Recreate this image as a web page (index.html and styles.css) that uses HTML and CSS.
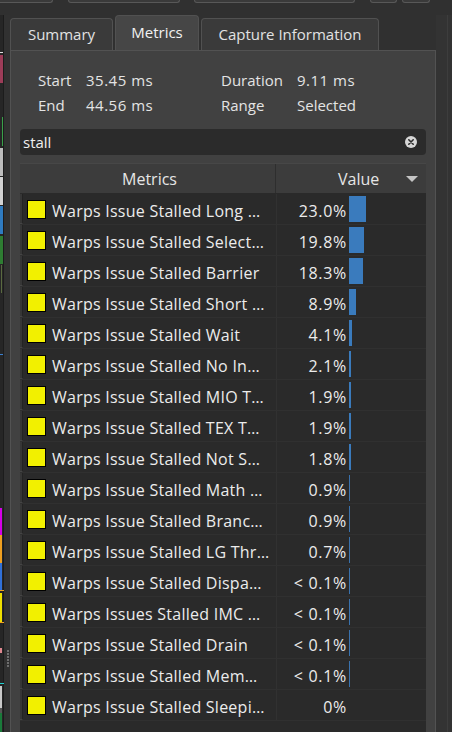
FILE: index.html
```html
<!DOCTYPE html>
<html>
<head>
<meta charset="utf-8">
<link rel="stylesheet" href="styles.css">
</head>
<body>
<div class="topbar">
  <div class="tbtn b1"></div>
  <div class="tbtn b2"></div>
  <div class="tbtn b3"></div>
  <div class="tbtn b4"></div>
  <div class="tbtn b5"></div>
</div>
<div class="content">
  <div class="sidebar">
    <div class="track"></div>
    <div class="item" style="top:37px;height:1px;left:0;width:3px;background:#e0e0e0"></div>
    <div class="item" style="top:40px;height:28px;left:0;width:3px;background:#9c3c58"></div>
    <div class="item" style="top:102px;height:29px;left:2px;width:1px;background:#3aa04a"></div>
    <div class="item" style="top:133px;height:28px;left:0;width:3px;background:#bdbdbd"></div>
    <div class="item" style="top:162px;height:28px;left:0;width:3px;background:#d2d2d2"></div>
    <div class="item" style="top:191px;height:28px;left:0;width:3px;background:#2f7bc0"></div>
    <div class="item" style="top:221px;height:28px;left:0;width:3px;background:#2e7d32"></div>
    <div class="item" style="top:250px;height:28px;left:1px;width:1px;background:#5a6a40"></div>
    <div class="item" style="top:339px;height:1px;left:0;width:3px;background:#3a80d0"></div>
    <div class="item" style="top:493px;height:27px;left:0;width:2px;background:#d400e8"></div>
    <div class="item" style="top:520px;height:28px;left:0;width:2px;background:#f0a020"></div>
    <div class="item" style="top:548px;height:27px;left:0;width:2px;background:#3070d8"></div>
    <div class="item" style="top:575px;height:1px;left:0;width:4px;background:#f0a020"></div>
    <div class="item" style="top:578px;height:29px;left:0;width:2px;background:#f0e000"></div>
    <div class="item" style="top:607px;height:1px;left:0;width:4px;background:#f0a020"></div>
    <div class="item" style="top:633px;height:5px;left:0;width:2px;background:#e08890"></div>
    <div class="item" style="top:668px;height:1px;left:0;width:4px;background:#20d0d0"></div>
    <div class="item" style="top:671px;height:22px;left:0;width:2px;background:#c8c8c8"></div>
    <div class="item" style="top:693px;height:5px;left:0;width:2px;background:#555555"></div>
    <div class="item" style="top:698px;height:19px;left:0;width:2px;background:#1a7a3a"></div>
    <div class="grip"><span></span><span></span><span></span><span></span><span></span><span></span></div>
  </div>
  <div class="center">
    <div class="tabs">
      <div class="tab t-summary">Summary</div>
      <div class="tab t-metrics active">Metrics</div>
      <div class="tab t-capture">Capture Information</div>
    </div>
    <div class="panel">
      <div class="info">
        <span>Start</span><span class="nv">35.45 ms</span><span>Duration</span><span class="nv">9.11 ms</span>
        <span>End</span><span class="nv">44.56 ms</span><span>Range</span><span>Selected</span>
      </div>
      <div class="search">
        <span class="search-text">stall</span>
        <svg class="clear" width="12" height="12" viewBox="0 0 12 12"><circle cx="6" cy="6" r="6" fill="#d6d6d6"/><path d="M3.8 3.8 L8.2 8.2 M8.2 3.8 L3.8 8.2" stroke="#2c2c2c" stroke-width="1.6" stroke-linecap="round"/></svg>
      </div>
      <div class="table">
        <div class="thead">
          <div class="th th-metrics">Metrics</div>
          <div class="th th-value"><span class="vlabel">Value</span><svg class="sort" width="12" height="6" viewBox="0 0 12 6"><path d="M0 0 H12 L6 6 Z" fill="#c4c4c4"/></svg></div>
        </div>
        <div class="row"><div class="gut"></div><div class="name"><span class="sq"></span><span class="lbl">Warps Issue Stalled Long …</span></div><div class="val"><span class="num">23.0%</span><span class="bar" style="width:17px"></span></div></div>
        <div class="row"><div class="gut"></div><div class="name"><span class="sq"></span><span class="lbl">Warps Issue Stalled Select…</span></div><div class="val"><span class="num">19.8%</span><span class="bar" style="width:15px"></span></div></div>
        <div class="row"><div class="gut"></div><div class="name"><span class="sq"></span><span class="lbl">Warps Issue Stalled Barrier</span></div><div class="val"><span class="num">18.3%</span><span class="bar" style="width:14px"></span></div></div>
        <div class="row"><div class="gut"></div><div class="name"><span class="sq"></span><span class="lbl">Warps Issue Stalled Short …</span></div><div class="val"><span class="num">8.9%</span><span class="bar" style="width:7px"></span></div></div>
        <div class="row"><div class="gut"></div><div class="name"><span class="sq"></span><span class="lbl">Warps Issue Stalled Wait</span></div><div class="val"><span class="num">4.1%</span><span class="bar" style="width:3px"></span></div></div>
        <div class="row"><div class="gut"></div><div class="name"><span class="sq"></span><span class="lbl">Warps Issue Stalled No In…</span></div><div class="val"><span class="num">2.1%</span><span class="bar" style="width:2px"></span></div></div>
        <div class="row"><div class="gut"></div><div class="name"><span class="sq"></span><span class="lbl">Warps Issue Stalled MIO T…</span></div><div class="val"><span class="num">1.9%</span><span class="bar" style="width:2px"></span></div></div>
        <div class="row"><div class="gut"></div><div class="name"><span class="sq"></span><span class="lbl">Warps Issue Stalled TEX T…</span></div><div class="val"><span class="num">1.9%</span><span class="bar" style="width:2px"></span></div></div>
        <div class="row"><div class="gut"></div><div class="name"><span class="sq"></span><span class="lbl">Warps Issue Stalled Not S…</span></div><div class="val"><span class="num">1.8%</span><span class="bar" style="width:2px"></span></div></div>
        <div class="row"><div class="gut"></div><div class="name"><span class="sq"></span><span class="lbl">Warps Issue Stalled Math …</span></div><div class="val"><span class="num">0.9%</span><span class="bar thin" style="width:1px"></span></div></div>
        <div class="row"><div class="gut"></div><div class="name"><span class="sq"></span><span class="lbl">Warps Issue Stalled Branc…</span></div><div class="val"><span class="num">0.9%</span><span class="bar thin" style="width:1px"></span></div></div>
        <div class="row"><div class="gut"></div><div class="name"><span class="sq"></span><span class="lbl">Warps Issue Stalled LG Thr…</span></div><div class="val"><span class="num">0.7%</span><span class="bar thin" style="width:1px"></span></div></div>
        <div class="row"><div class="gut"></div><div class="name"><span class="sq"></span><span class="lbl">Warps Issue Stalled Dispa…</span></div><div class="val"><span class="num">&lt; 0.1%</span><span class="bar thin" style="width:1px"></span></div></div>
        <div class="row"><div class="gut"></div><div class="name"><span class="sq"></span><span class="lbl">Warps Issues Stalled IMC …</span></div><div class="val"><span class="num">&lt; 0.1%</span><span class="bar thin" style="width:1px"></span></div></div>
        <div class="row"><div class="gut"></div><div class="name"><span class="sq"></span><span class="lbl">Warps Issue Stalled Drain</span></div><div class="val"><span class="num">&lt; 0.1%</span><span class="bar thin" style="width:1px"></span></div></div>
        <div class="row"><div class="gut"></div><div class="name"><span class="sq"></span><span class="lbl">Warps Issue Stalled Mem…</span></div><div class="val"><span class="num">&lt; 0.1%</span><span class="bar thin" style="width:1px"></span></div></div>
        <div class="row"><div class="gut"></div><div class="name"><span class="sq"></span><span class="lbl">Warps Issue Stalled Sleepi…</span></div><div class="val"><span class="num">0%</span></div></div>
      </div>
    </div>
  </div>
  <div class="rstrip"><div class="rline"></div></div>
</div>
</body>
</html>
```
FILE: styles.css
```css
* { box-sizing: border-box; }
html, body { margin: 0; padding: 0; }
body {
  width: 452px;
  height: 732px;
  overflow: hidden;
  background: #303030;
  font-family: "Open Sans", "Noto Sans", sans-serif;
  font-size: 15px;
  color: #e6e6e6;
  display: flex;
  flex-direction: column;
}
.topbar {
  height: 15px;
  flex: none;
  display: flex;
  align-items: flex-start;
  background: #303030;
}
.tbtn {
  height: 3px;
  background: #3a3a3a;
  border: 1px solid #585858;
  border-top: none;
  border-radius: 0 0 3px 3px;
}
.b1 { width: 58px; margin-left: -5px; }
.b2 { width: 112px; margin-left: 15px; }
.b3 { width: 161px; margin-left: 14px; }
.b4 { width: 27px; margin-left: 15px; }
.b5 { width: 28px; margin-left: 5px; }
.content {
  flex: 1;
  display: flex;
  min-height: 0;
}
.sidebar {
  width: 10px;
  flex: none;
  position: relative;
  background: #313131;
}
.track {
  position: absolute;
  left: 0; top: 0; bottom: 0;
  width: 4px;
  background: #262626;
  border-right: 1px solid #1c1c1c;
}
.item { position: absolute; }
.grip {
  position: absolute;
  left: 7px;
  top: 635px;
  display: flex;
  flex-direction: column;
  gap: 1px;
}
.grip span { width: 2px; height: 2px; background: #6e6e6e; }
.center {
  width: 426px;
  flex: none;
  display: flex;
  flex-direction: column;
}
.tabs {
  height: 35px;
  flex: none;
  display: flex;
  align-items: flex-end;
  gap: 1px;
}
.tab {
  height: 32px;
  display: flex;
  align-items: center;
  justify-content: center;
  background: #3a3a3a;
  border: 1px solid #515151;
  border-bottom: none;
  border-radius: 4px 4px 0 0;
  color: #e2e2e2;
  padding-bottom: 1px;
}
.t-summary { width: 103px; }
.t-metrics { width: 84px; height: 35px; margin-left: 1px; padding-bottom: 3px; }
.t-capture { width: 178px; margin-left: 1px; }
.tab.active { background: #464646; color: #f2f2f2; }
.panel {
  flex: 1;
  min-height: 0;
  background: #414141;
  border: 1px solid #525252;
  border-bottom: none;
  padding: 17px 9px 0 9px;
  display: flex;
  flex-direction: column;
}
.info {
  display: grid;
  grid-template-columns: 48px 135px 76px auto;
  line-height: 25px;
  padding-left: 18px;
  color: #e4e4e4;
}
.nv { letter-spacing: 0.5px; }
.search {
  margin-top: 11px;
  height: 26px;
  flex: none;
  background: #2b2b2b;
  border-radius: 4px;
  display: flex;
  align-items: center;
  padding: 0 9px 0 3px;
}
.search-text { flex: 1; color: #f0f0f0; }
.clear { flex: none; }
.table {
  margin-top: 8px;
  flex: 1;
  min-height: 0;
  background: #2a2a2a;
  display: flex;
  flex-direction: column;
  overflow: hidden;
}
.thead {
  height: 31px;
  flex: none;
  display: flex;
  background: #3c3c3c;
  border-top: 1px solid #474747;
  border-bottom: 1px solid #2a2a2a;
  font-size: 16px;
}
.th { display: flex; align-items: center; color: #e6e6e6; }
.th-metrics {
  width: 256px;
  justify-content: center;
  padding-left: 4px;
  border-right: 1px solid #2e2e2e;
}
.th-value { flex: 1; padding-left: 62px; padding-right: 8px; }
.vlabel { flex: 1; }
.sort { flex: none; }
.row {
  height: 31px;
  flex: none;
  display: flex;
  border-bottom: 1px solid #303030;
  font-size: 16px;
}
.gut {
  width: 3px;
  flex: none;
  background: #363636;
  border-right: 1px solid #232323;
  border-bottom: 1px solid #444;
}
.name {
  width: 253px;
  flex: none;
  display: flex;
  align-items: center;
  padding-left: 4px;
  white-space: nowrap;
  overflow: hidden;
}
.sq {
  width: 19px;
  height: 19px;
  flex: none;
  background: #f2f000;
  border: 1px solid #000;
}
.lbl { margin-left: 6px; padding-top: 3px; color: #ececec; letter-spacing: 0.25px; }
.val {
  flex: 1;
  display: flex;
  align-items: center;
  border-left: 1px solid #313131;
}
.num {
  width: 70px;
  margin-right: -1px;
  padding-top: 3px;
  text-align: right;
  color: #ececec;
  letter-spacing: 0.7px;
  white-space: nowrap;
}
.bar {
  margin-left: 3px;
  height: 26px;
  background: #3a7bbd;
}
.bar.thin { background: #3a72ad; }
.rstrip {
  width: 16px;
  flex: none;
  background: #333;
  position: relative;
  display: flex;
  justify-content: flex-end;
  padding-right: 4px;
}
.rline { width: 1px; background: #3d3d3d; }
```
